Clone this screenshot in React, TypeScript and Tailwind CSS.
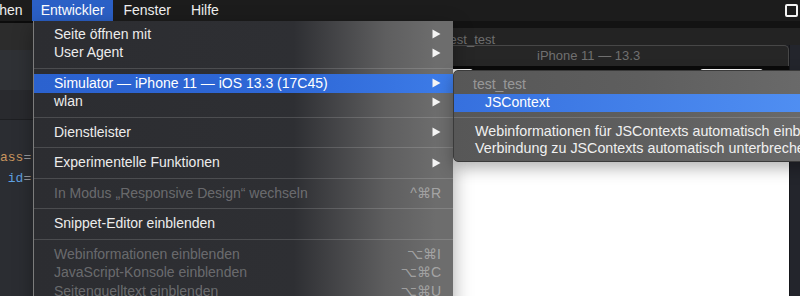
import React from "react";

type Row =
  | { kind: "sep" }
  | {
      kind: "item";
      label: string;
      arrow?: boolean;
      shortcut?: string;
      disabled?: boolean;
      active?: boolean;
    };

const Arrow = () => (
  <svg width="9" height="10" viewBox="0 0 9 10" className="shrink-0">
    <polygon points="0.5,0.5 8.5,5 0.5,9.5" fill="#f4f4f4" />
  </svg>
);

function MenuItem({ row }: { row: Extract<Row, { kind: "item" }> }) {
  const bg = row.active
    ? "bg-[linear-gradient(90deg,#2b62cf_0%,#2e67d6_60%,#3d7ce8_100%)] text-white"
    : row.disabled
    ? "text-white/30"
    : "text-[#ececec]";
  return (
    <div className={`flex h-[18.5px] items-center justify-between whitespace-nowrap pl-[20px] pr-[12px] ${bg}`}>
      <span>{row.label}</span>
      {row.arrow && <Arrow />}
      {row.shortcut && <span className="text-white/40">{row.shortcut}</span>}
    </div>
  );
}

function Sep() {
  return (
    <div className="flex h-[12px] items-center">
      <div className="h-px w-full bg-white/15" />
    </div>
  );
}

const rows: Row[] = [
  { kind: "item", label: "Seite öffnen mit", arrow: true },
  { kind: "item", label: "User Agent", arrow: true },
  { kind: "sep" },
  { kind: "item", label: "Simulator — iPhone 11 — iOS 13.3 (17C45)", arrow: true, active: true },
  { kind: "item", label: "wlan", arrow: true },
  { kind: "sep" },
  { kind: "item", label: "Dienstleister", arrow: true },
  { kind: "sep" },
  { kind: "item", label: "Experimentelle Funktionen", arrow: true },
  { kind: "sep" },
  { kind: "item", label: "In Modus „Responsive Design“ wechseln", shortcut: "^⌘R", disabled: true },
  { kind: "sep" },
  { kind: "item", label: "Snippet-Editor einblenden" },
  { kind: "sep" },
  { kind: "item", label: "Webinformationen einblenden", shortcut: "⌥⌘I", disabled: true },
  { kind: "item", label: "JavaScript-Konsole einblenden", shortcut: "⌥⌘C", disabled: true },
  { kind: "item", label: "Seitenquelltext einblenden", shortcut: "⌥⌘U", disabled: true },
];

export default function App() {
  return (
    <div className="relative h-[296px] w-[800px] overflow-hidden bg-[#2b2d32] font-['Liberation_Sans','DejaVu_Sans',sans-serif] text-[14px]">
      {/* Menu bar */}
      <div className="relative flex h-[21px] items-center bg-[#1c1c1c] text-[#f0f0f0]">
        <div className="ml-[-65px] flex h-full items-center px-[9px]">Lesezeichen</div>
        <div className="flex h-full items-center bg-[#2b60c6] px-[9px] text-white">Entwickler</div>
        <div className="flex h-full items-center px-[10px]">Fenster</div>
        <div className="flex h-full items-center px-[10px]">Hilfe</div>
        <div className="absolute left-[785px] top-[4px] h-[13px] w-[13px] rounded-[2px] border-2 border-[#f4f4f4]" />
      </div>

      {/* Background window */}
      <div className="grid h-[275px] grid-cols-[453px_1fr]">
        {/* left column */}
        <div className="flex flex-col">
          <div className="h-[2px] bg-[#0c0c0c]" />
          <div className="h-[27px] bg-[#2c2c2c]" />
          <div className="h-[40px] bg-[#2f3135]" />
          <div className="h-[30px] border-b border-[#1e1f22] bg-[#292a2e]" />
          <div className="flex-1 bg-[#2b2d32] pt-[27px] font-['Liberation_Mono',monospace] text-[13px] leading-[21px]">
            <div className="ml-[-15.6px] whitespace-pre">
              <span className="text-[#c8955e]">class</span>
              <span className="text-[#9a9ca0]">=</span>
            </div>
            <div className="ml-[-15.6px] whitespace-pre">
              <span>{"   "}</span>
              <span className="text-[#5fa0e0]">id</span>
              <span className="text-[#9a9ca0]">=</span>
            </div>
          </div>
        </div>
        {/* right column */}
        <div className="flex flex-col">
          <div className="h-[7px] bg-[#131313]" />
          <div className="relative h-[17px] bg-[#232323] text-[13px] text-[#6e6e6e]">
            <span className="absolute left-[-7px] top-[2px]">test_test</span>
          </div>
          <div className="flex flex-1 bg-[#1e1f24]">
            <div className="flex flex-1 flex-col">
              <div className="flex h-[21px] items-center rounded-tr-[5px] border-r border-t border-[#474747] bg-[#262626] pl-[84px] text-[13px] text-[#707070]">
                iPhone 11 — 13.3
              </div>
              <div className="flex h-[6px] items-end bg-[#0a0a0a]">
                <div className="h-[3px] w-[20px] rounded-tr-[8px] bg-white" />
                <div className="ml-[227px] h-[3px] w-[63px] rounded-t-[10px] bg-white" />
              </div>
              <div className="flex-1 bg-white" />
            </div>
            <div className="w-[11px] border-l border-[#16171b] bg-[#23252c]" />
          </div>
        </div>
      </div>

      {/* Main dropdown menu */}
      <div className="absolute left-[33px] top-[21px] h-[290px] w-[420px] border-l border-white/10 bg-[linear-gradient(90deg,#2c2d31_0%,#2e2f33_62%,#5e5e5f_84%,#6d6d6d_96%)] pt-[4px] shadow-[0_6px_18px_rgba(0,0,0,0.35)]">
        {rows.map((r, i) =>
          r.kind === "sep" ? <Sep key={i} /> : <MenuItem key={i} row={r} />
        )}
      </div>

      {/* Submenu */}
      <div className="absolute left-[453px] top-[70px] w-[370px] rounded-l-[5px] border border-[#3a3a3a] bg-[linear-gradient(90deg,#575757_0%,#5e5e5e_50%,#6b6b6b_100%)] py-[4px] shadow-[0_6px_16px_rgba(0,0,0,0.3)]">
        <div className="flex h-[18.5px] items-center whitespace-nowrap pl-[19px] text-white/40">test_test</div>
        <div className="flex h-[18.5px] items-center whitespace-nowrap bg-[linear-gradient(90deg,#3670de_0%,#4380e9_50%,#5190f3_100%)] pl-[31px] text-white">
          JSContext
        </div>
        <div className="flex h-[11px] items-center">
          <div className="h-px w-full bg-white/15" />
        </div>
        <div className="flex h-[17px] items-center whitespace-nowrap pl-[21px] text-[14.3px] text-[#f0f0f0]">
          Webinformationen für JSContexts automatisch einblenden
        </div>
        <div className="flex h-[17px] items-center whitespace-nowrap pl-[21px] text-[14.3px] text-[#f0f0f0]">
          Verbindung zu JSContexts automatisch unterbrechen
        </div>
      </div>
    </div>
  );
}
